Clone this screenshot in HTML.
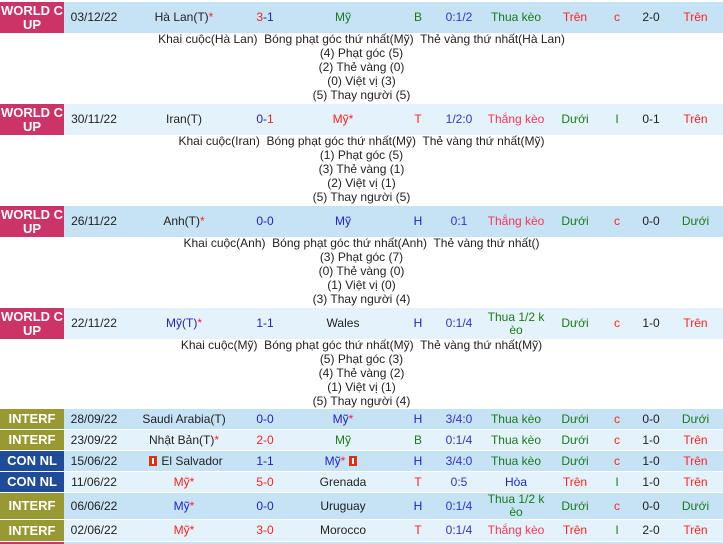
<!DOCTYPE html>
<html><head><meta charset="utf-8"><style>
*{margin:0;padding:0;box-sizing:border-box}
body{width:723px;height:544px;background:#fff;font-family:"Liberation Sans",Arial,sans-serif;font-size:12px;position:relative;overflow:hidden;color:#222}
.r{position:absolute;left:0;width:723px;display:flex}
.r>div{display:flex;align-items:center;justify-content:center;text-align:center;line-height:13px;height:100%}
.d{background:#c6e2f5}.l{background:#e4f3fb}
.lab{width:64px;color:#fff;font-weight:bold;font-size:13px;line-height:14px!important}
.wc{background:#cc3366}.in{background:#999933}.cn{background:#1f4c99}
.c1{width:60px}.c2{width:120px}.c3{width:42px}.c4{width:114px}.c5{width:36px}.c6{width:46px}.c7{width:68px}.c8{width:50px}.c9{width:34px}.c10{width:34px}.c11{width:55px}
.det{position:absolute;left:0;width:723px;text-align:center;line-height:14px;color:#222}
.g{color:#1a7a1a}.rd{color:#ff2222}.b{color:#2222cc}.bl{color:#3333cc}.k{color:#222}.gr{color:#557755}.pk{color:#ff3355}
.fl{display:inline-block;width:8px;height:10px;background:#e03010;margin:0 4px;position:relative;vertical-align:-1px}
.fl:after{content:"";position:absolute;left:3px;top:2px;width:2px;height:6px;background:#fff}
</style></head><body>

<div class="r d" style="top:2px;height:31px"><div class="lab wc">WORLD C<br>UP</div><div class="c1">03/12/22</div><div class="c2">Hà Lan(T)<span class="rd">*</span></div><div class="c3"><span class="rd">3</span><span class="b">-1</span></div><div class="c4 g">Mỹ</div><div class="c5 g">B</div><div class="c6 bl">0:1/2</div><div class="c7 g">Thua kèo</div><div class="c8 rd">Trên</div><div class="c9 rd">c</div><div class="c10">2-0</div><div class="c11 rd">Trên</div></div>
<div class="det" style="top:32px">Khai cuộc(Hà Lan)&nbsp; Bóng phạt góc thứ nhất(Mỹ)&nbsp; Thẻ vàng thứ nhất(Hà Lan)<br>(4) Phạt góc (5)<br>(2) Thẻ vàng (0)<br>(0) Việt vị (3)<br>(5) Thay người (5)</div>

<div class="r l" style="top:104px;height:31px"><div class="lab wc">WORLD C<br>UP</div><div class="c1">30/11/22</div><div class="c2">Iran(T)</div><div class="c3 b">0-<span class="rd">1</span></div><div class="c4 rd">Mỹ*</div><div class="c5 rd">T</div><div class="c6 bl">1/2:0</div><div class="c7 pk">Thắng kèo</div><div class="c8 g">Dưới</div><div class="c9 g">I</div><div class="c10">0-1</div><div class="c11 rd">Trên</div></div>
<div class="det" style="top:134px">Khai cuộc(Iran)&nbsp; Bóng phạt góc thứ nhất(Mỹ)&nbsp; Thẻ vàng thứ nhất(Mỹ)<br>(1) Phạt góc (5)<br>(3) Thẻ vàng (1)<br>(2) Việt vị (1)<br>(5) Thay người (5)</div>

<div class="r d" style="top:206px;height:31px"><div class="lab wc">WORLD C<br>UP</div><div class="c1">26/11/22</div><div class="c2">Anh(T)<span class="rd">*</span></div><div class="c3 b">0-0</div><div class="c4 b">Mỹ</div><div class="c5 b">H</div><div class="c6 bl">0:1</div><div class="c7 pk">Thắng kèo</div><div class="c8 g">Dưới</div><div class="c9 rd">c</div><div class="c10">0-0</div><div class="c11 g">Dưới</div></div>
<div class="det" style="top:236px">Khai cuộc(Anh)&nbsp; Bóng phạt góc thứ nhất(Anh)&nbsp; Thẻ vàng thứ nhất()<br>(3) Phạt góc (7)<br>(0) Thẻ vàng (0)<br>(1) Việt vị (0)<br>(3) Thay người (4)</div>

<div class="r l" style="top:308px;height:31px"><div class="lab wc">WORLD C<br>UP</div><div class="c1">22/11/22</div><div class="c2 b">Mỹ(T)<span class="rd">*</span></div><div class="c3 b">1-1</div><div class="c4">Wales</div><div class="c5 b">H</div><div class="c6 bl">0:1/4</div><div class="c7 g">Thua 1/2 k<br>èo</div><div class="c8 g">Dưới</div><div class="c9 rd">c</div><div class="c10">1-0</div><div class="c11 rd">Trên</div></div>
<div class="det" style="top:338px">Khai cuộc(Mỹ)&nbsp; Bóng phạt góc thứ nhất(Mỹ)&nbsp; Thẻ vàng thứ nhất(Mỹ)<br>(5) Phạt góc (3)<br>(4) Thẻ vàng (2)<br>(1) Việt vị (1)<br>(5) Thay người (4)</div>

<div class="r d" style="top:409px;height:20px"><div class="lab in">INTERF</div><div class="c1">28/09/22</div><div class="c2">Saudi Arabia(T)</div><div class="c3 b">0-0</div><div class="c4 b">Mỹ<span class="rd">*</span></div><div class="c5 b">H</div><div class="c6 bl">3/4:0</div><div class="c7 g">Thua kèo</div><div class="c8 g">Dưới</div><div class="c9 rd">c</div><div class="c10">0-0</div><div class="c11 g">Dưới</div></div>
<div class="r l" style="top:430px;height:20px"><div class="lab in">INTERF</div><div class="c1">23/09/22</div><div class="c2">Nhật Bản(T)<span class="rd">*</span></div><div class="c3 rd">2-0</div><div class="c4 g">Mỹ</div><div class="c5 g">B</div><div class="c6 bl">0:1/4</div><div class="c7 g">Thua kèo</div><div class="c8 g">Dưới</div><div class="c9 rd">c</div><div class="c10">1-0</div><div class="c11 rd">Trên</div></div>
<div class="r d" style="top:451px;height:20px"><div class="lab cn">CON NL</div><div class="c1">15/06/22</div><div class="c2"><span class="fl"></span>El Salvador</div><div class="c3 b">1-1</div><div class="c4 b">Mỹ<span class="rd">*</span><span class="fl"></span></div><div class="c5 b">H</div><div class="c6 bl">3/4:0</div><div class="c7 g">Thua kèo</div><div class="c8 g">Dưới</div><div class="c9 rd">c</div><div class="c10">1-0</div><div class="c11 rd">Trên</div></div>
<div class="r l" style="top:472px;height:20px"><div class="lab cn">CON NL</div><div class="c1">11/06/22</div><div class="c2 rd">Mỹ*</div><div class="c3 rd">5-0</div><div class="c4">Grenada</div><div class="c5 rd">T</div><div class="c6 bl">0:5</div><div class="c7 b">Hòa</div><div class="c8 rd">Trên</div><div class="c9 g">I</div><div class="c10">1-0</div><div class="c11 rd">Trên</div></div>
<div class="r d" style="top:493px;height:26px"><div class="lab in">INTERF</div><div class="c1">06/06/22</div><div class="c2 b">Mỹ<span class="rd">*</span></div><div class="c3 b">0-0</div><div class="c4">Uruguay</div><div class="c5 b">H</div><div class="c6 bl">0:1/4</div><div class="c7 g">Thua 1/2 k<br>èo</div><div class="c8 g">Dưới</div><div class="c9 rd">c</div><div class="c10">0-0</div><div class="c11 g">Dưới</div></div>
<div class="r l" style="top:520px;height:21px"><div class="lab in">INTERF</div><div class="c1">02/06/22</div><div class="c2 rd">Mỹ*</div><div class="c3 rd">3-0</div><div class="c4">Morocco</div><div class="c5 rd">T</div><div class="c6 bl">0:1/4</div><div class="c7 pk">Thắng kèo</div><div class="c8 rd">Trên</div><div class="c9 g">I</div><div class="c10">2-0</div><div class="c11 rd">Trên</div></div>
<div class="r" style="top:542px;height:2px"><div style="width:64px;background:#cc3366"></div><div style="flex:1;background:#c6e2f5"></div></div>
</body></html>
